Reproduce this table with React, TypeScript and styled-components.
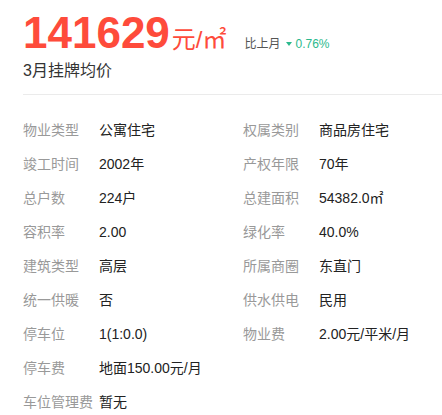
import React from 'react'
import styled, { createGlobalStyle } from 'styled-components'

const Global = createGlobalStyle`
  body {
    margin: 0;
    background: #fff;
    font-family: "Liberation Sans", "Noto Sans CJK SC", sans-serif;
  }
`

const Page = styled.div`
  width: 442px;
  padding-left: 23px;
  box-sizing: border-box;
`

const Header = styled.div`
  padding-top: 11px;
  padding-bottom: 12px;
  border-bottom: 1px solid #ebebeb;
`

const PriceLine = styled.div`
  display: flex;
  align-items: baseline;
  height: 44px;
  line-height: 44px;
`

const Price = styled.span`
  font-size: 44px;
  font-weight: bold;
  color: #fe4b3b;
`

const Unit = styled.span`
  font-size: 24px;
  color: #fe4b3b;
  margin-left: 2px;
`

const Compare = styled.span`
  margin-left: 18px;
  font-size: 12px;
  color: #555;
  display: inline-flex;
  align-items: center;
  gap: 5px;
`

const Change = styled.span`
  color: #2bb98d;
  display: inline-flex;
  align-items: center;
  gap: 4px;
  &::before {
    content: '';
    border-left: 3px solid transparent;
    border-right: 3px solid transparent;
    border-top: 4px solid #2bb98d;
  }
`

const Caption = styled.div`
  font-size: 16px;
  color: #333;
  line-height: 22px;
  margin-top: 5px;
`

const Grid = styled.div`
  display: grid;
  grid-template-columns: 220px 1fr;
  padding-top: 18px;
`

const Item = styled.div`
  display: flex;
  height: 34px;
  align-items: center;
  font-size: 14px;
  line-height: 20px;
`

const Label = styled.span`
  width: 76px;
  color: #999;
  white-space: nowrap;
`

const Value = styled.span`
  color: #222;
`

const items: [string, string][] = [
  ['物业类型', '公寓住宅'],
  ['权属类别', '商品房住宅'],
  ['竣工时间', '2002年'],
  ['产权年限', '70年'],
  ['总户数', '224户'],
  ['总建面积', '54382.0㎡'],
  ['容积率', '2.00'],
  ['绿化率', '40.0%'],
  ['建筑类型', '高层'],
  ['所属商圈', '东直门'],
  ['统一供暖', '否'],
  ['供水供电', '民用'],
  ['停车位', '1(1:0.0)'],
  ['物业费', '2.00元/平米/月'],
  ['停车费', '地面150.00元/月'],
  ['', ''],
  ['车位管理费', '暂无'],
]

export default function App() {
  return (
    <Page>
      <Global />
      <Header>
        <PriceLine>
          <Price>141629</Price>
          <Unit>元/㎡</Unit>
          <Compare>
            比上月
            <Change>0.76%</Change>
          </Compare>
        </PriceLine>
        <Caption>3月挂牌均价</Caption>
      </Header>
      <Grid>
        {items.map(([l, v], i) => (
          <Item key={i}>
            <Label>{l}</Label>
            <Value>{v}</Value>
          </Item>
        ))}
      </Grid>
    </Page>
  )
}
